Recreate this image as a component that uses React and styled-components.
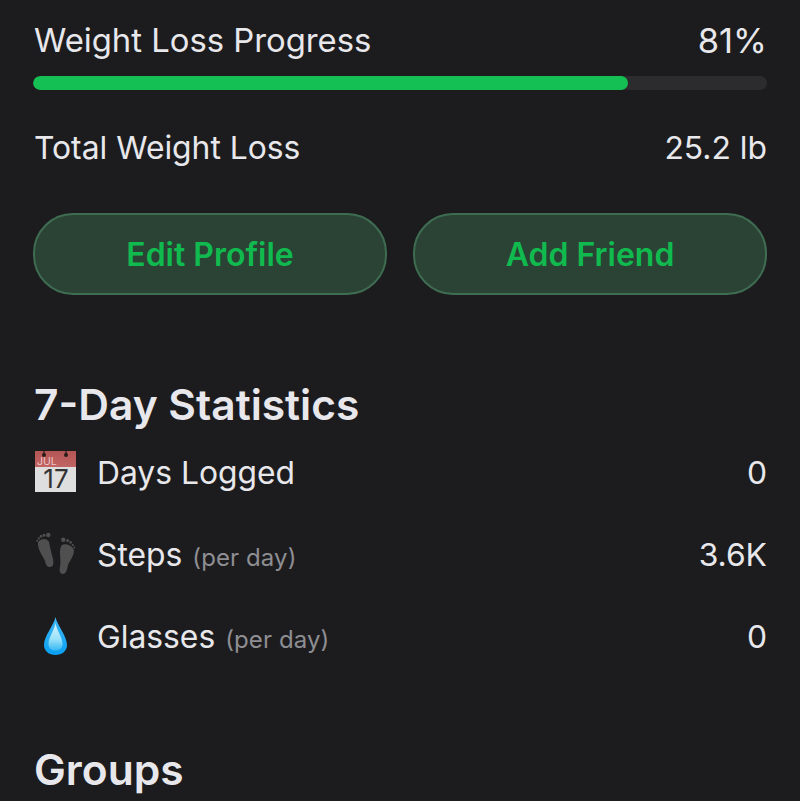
import React from 'react';
import styled, { createGlobalStyle } from 'styled-components';

const Global = createGlobalStyle`
  html, body { margin: 0; padding: 0; background: #1c1c1e; height: 801px; overflow: hidden; }
  body { font-family: Inter, "Noto Sans", sans-serif; -webkit-font-smoothing: antialiased; }
`;
const Page = styled.div`
  width: 800px; height: 801px; overflow: hidden; box-sizing: border-box;
  padding: 20px 33px 0; background: #1c1c1e; color: #e8e8ec;
`;
const InfoRow = styled.div`
  display: flex; justify-content: space-between; align-items: center;
  height: 40px; font-size: 31.8px; font-weight: 400;
  padding-left: 1px;
`;
const ProgressRow = styled(InfoRow)`
  font-size: 32.8px;
`;
const Percent = styled.span`
  font-size: 34.5px;
`;
const Track = styled.div`
  height: 14px; border-radius: 7px; background: #2c2c2e; margin-top: 16px; overflow: hidden;
`;
const Fill = styled.div`
  height: 100%; border-radius: 7px; background: #14c053;
`;
const TotalRow = styled(InfoRow)`
  margin-top: 37px;
`;
const Buttons = styled.div`
  display: grid; grid-template-columns: 1fr 1fr; gap: 26px; margin-top: 46px;
`;
const Button = styled.button`
  height: 82px; border-radius: 40px; box-sizing: border-box;
  background: #2a4335; border: 2px solid #3f6d52; color: #11ba4f;
  font: 600 32px Inter, sans-serif; padding: 0;
`;
const Heading = styled.h2`
  margin: 0; font-size: 42.5px; font-weight: 600; line-height: 50px; color: #e8e8ec; padding-left: 1px;
`;
const StatsHeading = styled(Heading)`
  margin-top: 85px;
`;
const StatList = styled.div`
  display: flex; flex-direction: column; gap: 36px; margin-top: 19px;
`;
const StatRow = styled.div`
  display: flex; align-items: center; height: 46px; font-size: 31.8px; padding-left: 1px;
`;
const IconBox = styled.span`
  width: 44px; height: 44px; margin-right: 19px; display: flex; flex: none;
`;
const Label = styled.span`
  flex: 1; white-space: nowrap;
`;
const Unit = styled.span`
  font-size: 24px; color: #8e8e93; margin-left: 10px; letter-spacing: 0.1px;
`;
const GroupsHeading = styled(Heading)`
  margin-top: 86px;
`;

const CalendarIcon = () => (
  <svg width="44" height="44" viewBox="0 0 44 44">
    <defs>
      <linearGradient id="calHead" x1="0" y1="0" x2="0" y2="1">
        <stop offset="0" stopColor="#b45654" />
        <stop offset="1" stopColor="#c06464" />
      </linearGradient>
    </defs>
    <rect x="1" y="1" width="41" height="16" fill="url(#calHead)" />
    <rect x="1" y="17" width="41" height="25" fill="#dedede" />
    <circle cx="10" cy="5" r="2" fill="#2a1a1a" />
    <circle cx="32" cy="5" r="2" fill="#2a1a1a" />
    <rect x="9.4" y="0" width="1.2" height="5" fill="#2a1a1a" />
    <rect x="31.4" y="0" width="1.2" height="5" fill="#2a1a1a" />
    <text x="3" y="15" fontFamily="Inter, sans-serif" fontSize="10.5" fill="#eec6c6">JUL</text>
    <text x="22" y="38" textAnchor="middle" fontFamily="Inter, sans-serif" fontSize="26" fill="#333">17</text>
  </svg>
);
const FeetIcon = () => (
  <svg width="44" height="44" viewBox="0 0 44 44" fill="#4f4f4f">
    <path d="M4 10 C7 6 13 6 15 10 C16 15 17 20 19 27 C20 32 19 35 16 35 C13 35 12 33 11 29 C9 24 3 17 4 10Z" />
    <circle cx="14.3" cy="3" r="2.2" /><circle cx="10" cy="3.2" r="1.5" /><circle cx="7" cy="4.4" r="1.3" /><circle cx="4.8" cy="6.4" r="1.1" /><circle cx="3.2" cy="8.8" r="1" />
    <path d="M28 13 C31 11 38 13 40 18 C40 24 36 28 34 33 C33 38 32 42 29 42 C26 42 25 39 26 35 C27 30 26 25 26 20 C26 16 27 14 28 13Z" />
    <circle cx="29.3" cy="7.7" r="2.2" /><circle cx="33.6" cy="8.6" r="1.5" /><circle cx="36.6" cy="10.4" r="1.3" /><circle cx="38.8" cy="13" r="1.1" /><circle cx="40.3" cy="15.6" r="1" />
  </svg>
);
const DropIcon = () => (
  <svg width="44" height="44" viewBox="0 0 44 44">
    <defs>
      <linearGradient id="dropOuter" x1="0" y1="0" x2="0" y2="1">
        <stop offset="0" stopColor="#3fb8f4" />
        <stop offset="1" stopColor="#0a9ff2" />
      </linearGradient>
      <linearGradient id="dropInner" x1="0" y1="0" x2="0" y2="1">
        <stop offset="0" stopColor="#d8f5fd" />
        <stop offset="0.6" stopColor="#98e0f9" />
        <stop offset="1" stopColor="#35b8f4" />
      </linearGradient>
    </defs>
    <path d="M21.5 3 C23 11 33 22 33 31 C33 37 28 41 21.5 41 C15 41 10 37 10 31 C10 22 20 11 21.5 3Z" fill="url(#dropOuter)" />
    <path d="M21.5 9 C22.5 16 28.5 23 28.5 30 C28.5 34 26 36.5 21.5 36.5 C17 36.5 14.5 34 14.5 30 C14.5 23 20.5 16 21.5 9Z" fill="url(#dropInner)" />
  </svg>
);

export default function App() {
  return (
    <Page>
      <Global />
      <ProgressRow><span>Weight Loss Progress</span><Percent>81%</Percent></ProgressRow>
      <Track><Fill style={{ width: '81%' }} /></Track>
      <TotalRow><span>Total Weight Loss</span><span>25.2 lb</span></TotalRow>
      <Buttons>
        <Button>Edit Profile</Button>
        <Button>Add Friend</Button>
      </Buttons>
      <StatsHeading>7-Day Statistics</StatsHeading>
      <StatList>
        <StatRow><IconBox><CalendarIcon /></IconBox><Label>Days Logged</Label><span>0</span></StatRow>
        <StatRow><IconBox><FeetIcon /></IconBox><Label>Steps<Unit>(per day)</Unit></Label><span>3.6K</span></StatRow>
        <StatRow><IconBox><DropIcon /></IconBox><Label>Glasses<Unit>(per day)</Unit></Label><span>0</span></StatRow>
      </StatList>
      <GroupsHeading>Groups</GroupsHeading>
    </Page>
  );
}
